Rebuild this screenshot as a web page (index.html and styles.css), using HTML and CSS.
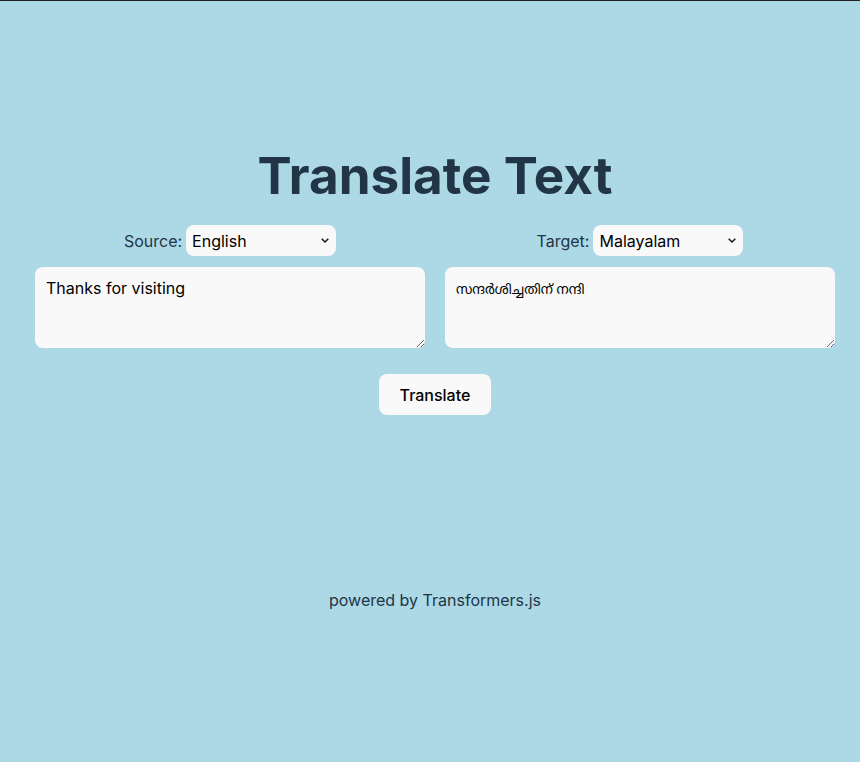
FILE: index.html
```html
<!DOCTYPE html>
<html lang="en">
<head>
<meta charset="utf-8">
<title>Translate Text</title>
<link rel="stylesheet" href="styles.css">
</head>
<body>
<div class="topline"></div>
<main class="app">
  <h1 class="title">Translate Text</h1>
  <div class="columns">
    <div class="col">
      <div class="lang-row">
        <label class="lang-label" for="src">Source:</label>
        <select id="src" class="lang-select">
          <option>English</option>
        </select>
      </div>
      <textarea class="box" rows="3">Thanks for visiting</textarea>
    </div>
    <div class="col">
      <div class="lang-row">
        <label class="lang-label" for="tgt">Target:</label>
        <select id="tgt" class="lang-select">
          <option>Malayalam</option>
        </select>
      </div>
      <textarea class="box box-out" rows="3" readonly>സന്ദർശിച്ചതിന് നന്ദി</textarea>
    </div>
  </div>
  <button class="btn">Translate</button>
  <p class="footer">powered by Transformers.js</p>
</main>
</body>
</html>
```
FILE: styles.css
```css
html, body {
  margin: 0;
  padding: 0;
}
body {
  background: #add8e6;
  color: #213547;
  font-family: Inter, "Noto Sans", sans-serif;
  font-size: 16px;
  line-height: 1.5;
  min-height: 762px;
}
.topline {
  height: 1px;
  background: #222;
}
.app {
  width: 800px;
  margin-left: 35px;
  display: flex;
  flex-direction: column;
  align-items: center;
  padding-top: 146px;
}
.title {
  margin: 0;
  font-size: 51.2px;
  line-height: 1.1;
  font-weight: 700;
  color: #213547;
}
.columns {
  margin-top: 22px;
  width: 100%;
  display: flex;
  gap: 20px;
}
.col {
  flex: 1;
  display: flex;
  flex-direction: column;
  align-items: center;
  gap: 11px;
}
.lang-row {
  display: flex;
  align-items: center;
  gap: 4px;
}
.lang-label {
  font-size: 16px;
}
.lang-select {
  -webkit-appearance: none;
  appearance: none;
  width: 150px;
  height: 31px;
  border: none;
  border-radius: 8px;
  background-color: #f9f9f9;
  background-image: url("data:image/svg+xml,%3Csvg xmlns='http://www.w3.org/2000/svg' width='8' height='5' viewBox='0 0 8 5'%3E%3Cpath d='M0.7 0.7 L4 4 L7.3 0.7' fill='none' stroke='%23111' stroke-width='1.4'/%3E%3C/svg%3E");
  background-repeat: no-repeat;
  background-position: right 7px center;
  color: #000;
  font-family: Inter, sans-serif;
  font-size: 16px;
  padding: 0 20px 0 6px;
}
.box {
  box-sizing: border-box;
  width: 100%;
  height: 81px;
  border: none;
  border-radius: 8px;
  background: #f9f9f9;
  color: #000;
  font-family: Inter, "Noto Sans", "Noto Sans Malayalam", sans-serif;
  font-size: 16px;
  line-height: 1.2;
  padding: 12px 11px;
}
.box-out {
  font-size: 13.333px;
  padding-top: 14px;
}
.btn {
  margin-top: 26px;
  width: 112px;
  height: 41px;
  border: 1px solid transparent;
  border-radius: 8px;
  background: #f9f9f9;
  color: #000;
  font-family: Inter, sans-serif;
  font-size: 16px;
  font-weight: 500;
  cursor: pointer;
}
.footer {
  margin: 173px 0 0;
  font-size: 16px;
}
```
